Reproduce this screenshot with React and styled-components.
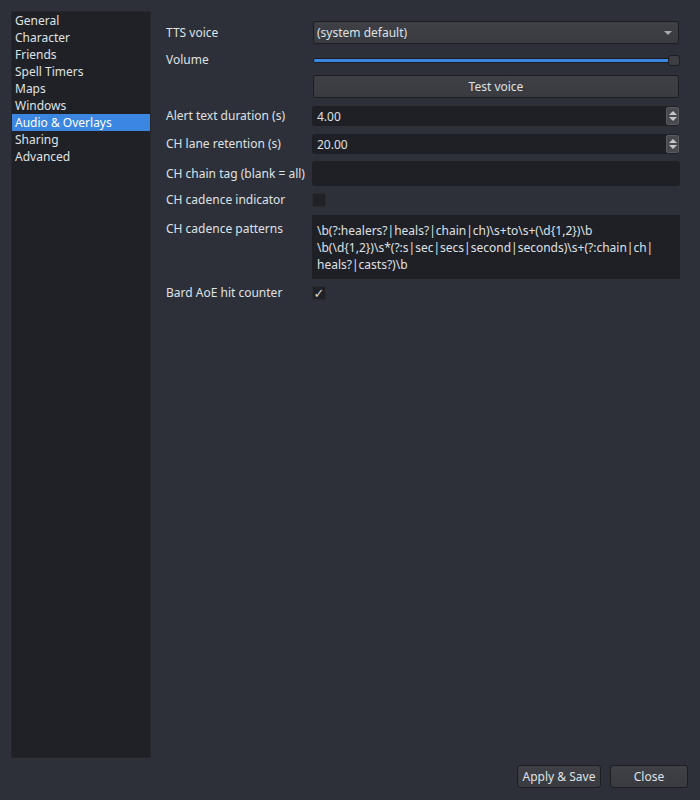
import styled, { createGlobalStyle } from "styled-components";

const GlobalStyle = createGlobalStyle`
  html, body {
    margin: 0;
    padding: 0;
    background: #2d3039;
  }
  body {
    font-family: "Noto Sans", "DejaVu Sans", sans-serif;
    font-size: 12px;
    color: #dfe1e5;
  }
`;

const Window = styled.div`
  width: 700px;
  height: 800px;
  box-sizing: border-box;
  padding: 11px 12px 12px 11px;
  display: flex;
  flex-direction: column;
  background: #2d3039;
`;

const Main = styled.div`
  flex: 1;
  display: flex;
  min-height: 0;
`;

const Sidebar = styled.div`
  width: 140px;
  box-sizing: border-box;
  background: #202126;
  border: 1px solid #26272c;
  display: flex;
  flex-direction: column;
`;

const NavItem = styled.div`
  height: 17px;
  line-height: 17px;
  padding-left: 3px;
  white-space: nowrap;
  color: ${(p) => (p.$active ? "#ffffff" : "#dfe1e5")};
  background: ${(p) => (p.$active ? "#3a86e0" : "transparent")};
`;

const Form = styled.div`
  flex: 1;
  padding: 10px 8px 0 15px;
  display: flex;
  flex-direction: column;
`;

const Row = styled.div`
  display: grid;
  grid-template-columns: 146px 1fr;
  align-items: ${(p) => (p.$top ? "start" : "center")};
  margin-top: ${(p) => p.$mt || 0}px;
  height: ${(p) => p.$h || 18}px;
`;

const Label = styled.div`
  line-height: 18px;
  white-space: nowrap;
  padding-top: ${(p) => p.$pt || 0}px;
`;

const Combo = styled.div`
  height: 23px;
  box-sizing: border-box;
  margin-left: 1px;
  margin-right: 1px;
  border: 1px solid #1d1e22;
  border-radius: 3px;
  background: linear-gradient(#3e4046, #393b41);
  display: flex;
  align-items: center;
  justify-content: space-between;
  padding: 0 6px 0 3px;
`;

const Arrow = styled.span`
  width: 0;
  height: 0;
  border-left: 4px solid transparent;
  border-right: 4px solid transparent;
  border-top: 4px solid #a8a9ad;
`;

const SliderBox = styled.div`
  position: relative;
  height: 15px;
  margin-left: 1px;
  display: flex;
  align-items: center;
`;

const Groove = styled.div`
  flex: 1;
  height: 5px;
  box-sizing: border-box;
  border: 1px solid #1c1d21;
  border-radius: 2px;
  background: #3a86e0;
`;

const Handle = styled.div`
  position: absolute;
  right: 0;
  top: 2px;
  width: 12px;
  height: 11px;
  box-sizing: border-box;
  border: 1px solid #1d1e22;
  border-radius: 3px;
  background: #3c3e44;
`;

const Button = styled.button`
  height: 23px;
  width: ${(p) => (p.$w ? `${p.$w}px` : "auto")};
  box-sizing: border-box;
  border: 1px solid #1d1e22;
  border-radius: 3px;
  background: linear-gradient(#3e4046, #393b41);
  color: #dfe1e5;
  font-family: inherit;
  font-size: 12px;
  padding: 0;
  cursor: pointer;
`;

const FieldButton = styled(Button)`
  margin: 0 1px;
`;

const Spin = styled.div`
  height: 20px;
  box-sizing: border-box;
  background: #1f2025;
  border-radius: 3px;
  display: flex;
  align-items: center;
  padding-left: 5px;
  margin-right: 1px;
`;

const SpinText = styled.span`
  flex: 1;
`;

const SpinButtons = styled.div`
  width: 13px;
  height: 18px;
  box-sizing: border-box;
  background: #48494e;
  border: 1px solid #5a5b60;
  border-radius: 2px;
  display: flex;
  flex-direction: column;
  align-items: center;
  justify-content: center;
  gap: 2px;
`;

const Tri = styled.span`
  width: 0;
  height: 0;
  border-left: 4px solid transparent;
  border-right: 4px solid transparent;
  ${(p) =>
    p.$up
      ? "border-bottom: 4px solid #c5c6c9;"
      : "border-top: 4px solid #c5c6c9;"}
`;

const LineEdit = styled.div`
  height: 25px;
  background: #1f2025;
  border-radius: 3px;
`;

const Check = styled.div`
  width: 14px;
  height: 14px;
  box-sizing: border-box;
  background: #202126;
  border: 1px solid #2a2b30;
  display: flex;
  align-items: center;
  justify-content: center;
  color: #d8d9dc;
  font-size: 13px;
  line-height: 1;
`;

const TextArea = styled.div`
  height: 64px;
  box-sizing: border-box;
  background: #1f2025;
  padding: 7px 5px 6px;
  line-height: 17px;
  white-space: nowrap;
  overflow: hidden;
`;

const Line = styled.div``;

const Footer = styled.div`
  margin-top: 7px;
  display: flex;
  justify-content: flex-end;
  gap: 9px;
`;

const navItems = [
  "General",
  "Character",
  "Friends",
  "Spell Timers",
  "Maps",
  "Windows",
  "Audio & Overlays",
  "Sharing",
  "Advanced",
];

function SpinBox({ value }) {
  return (
    <Spin>
      <SpinText>{value}</SpinText>
      <SpinButtons>
        <Tri $up />
        <Tri />
      </SpinButtons>
    </Spin>
  );
}

export default function App() {
  return (
    <>
      <GlobalStyle />
      <Window>
        <Main>
          <Sidebar>
            {navItems.map((n) => (
              <NavItem key={n} $active={n === "Audio & Overlays"}>
                {n}
              </NavItem>
            ))}
          </Sidebar>
          <Form>
            <Row $h={23}>
              <Label>TTS voice</Label>
              <Combo>
                <span>(system default)</span>
                <Arrow />
              </Combo>
            </Row>
            <Row $mt={7} $h={15}>
              <Label>Volume</Label>
              <SliderBox>
                <Groove />
                <Handle />
              </SliderBox>
            </Row>
            <Row $mt={9} $h={23}>
              <span />
              <FieldButton>Test voice</FieldButton>
            </Row>
            <Row $mt={8} $h={20}>
              <Label>Alert text duration (s)</Label>
              <SpinBox value="4.00" />
            </Row>
            <Row $mt={8} $h={20}>
              <Label>CH lane retention (s)</Label>
              <SpinBox value="20.00" />
            </Row>
            <Row $mt={7} $h={25}>
              <Label>CH chain tag (blank = all)</Label>
              <LineEdit />
            </Row>
            <Row $mt={5}>
              <Label>CH cadence indicator</Label>
              <Check />
            </Row>
            <Row $mt={6} $top $h={64}>
              <Label $pt={5}>CH cadence patterns</Label>
              <TextArea>
                <Line>{"\\b(?:healers?|heals?|chain|ch)\\s+to\\s+(\\d{1,2})\\b"}</Line>
                <Line>{"\\b(\\d{1,2})\\s*(?:s|sec|secs|second|seconds)\\s+(?:chain|ch|"}</Line>
                <Line>{"heals?|casts?)\\b"}</Line>
              </TextArea>
            </Row>
            <Row $mt={5}>
              <Label>Bard AoE hit counter</Label>
              <Check>✓</Check>
            </Row>
          </Form>
        </Main>
        <Footer>
          <Button $w={84}>Apply &amp; Save</Button>
          <Button $w={78}>Close</Button>
        </Footer>
      </Window>
    </>
  );
}
